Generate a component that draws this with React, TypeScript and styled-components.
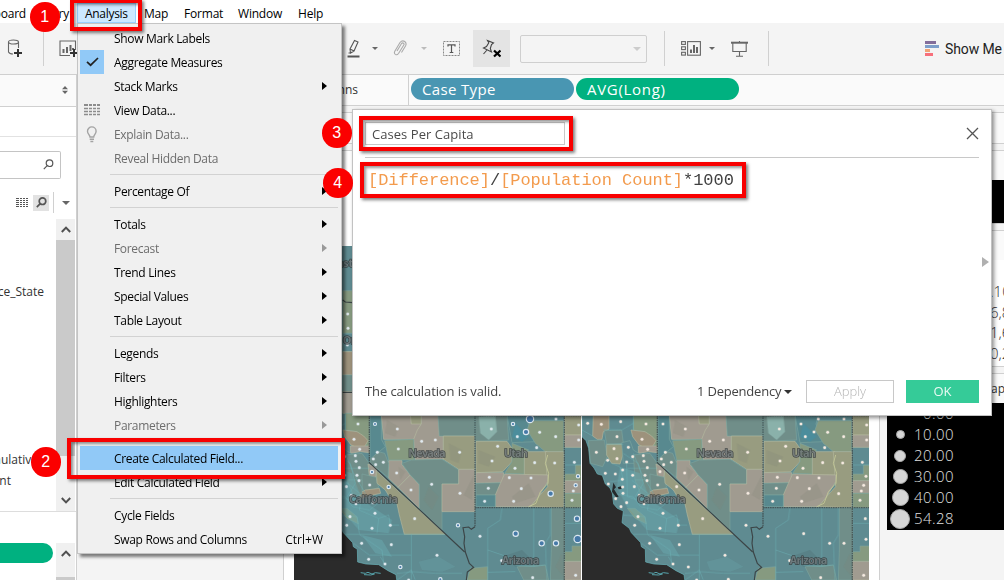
import React from 'react';
import styled, { createGlobalStyle, css } from 'styled-components';

const GlobalStyle = createGlobalStyle`
  * { box-sizing: border-box; }
  body { margin: 0; background: #fff; overflow: hidden; }
`;

const ui = `"Open Sans", "Noto Sans", sans-serif`;

const Screen = styled.div`
  position: relative;
  width: 1004px;
  height: 580px;
  overflow: hidden;
  display: flex;
  flex-direction: column;
  background: #f4f4f4;
  font: 12px/16px ${ui};
  color: #333;
`;

/* ---------- menu bar and toolbar ---------- */
const MenuBar = styled.div`
  display: flex;
  height: 23px;
  flex: none;
  background: #fff;
  color: #000;
  padding-top: 3px;
`;
const MenuTitle = styled.span<{ $w: number; $open?: boolean; $end?: boolean }>`
  width: ${p => p.$w}px;
  flex: none;
  height: 20px;
  line-height: 22px;
  white-space: nowrap;
  padding-left: ${p => (p.$open ? 7 : 8)}px;
  letter-spacing: -0.2px;
  ${p => p.$end && css`display: flex; justify-content: flex-end; padding-left: 0;`}
  ${p => p.$open && css`background: #cce8ff; border: 1px solid #99d1ff; line-height: 20px; letter-spacing: -0.3px;`}
`;
const Toolbar = styled.div`
  display: flex;
  flex: none;
  align-items: center;
  height: 52px;
  background: #f4f4f4;
  border-bottom: 1px solid #cfcfcf;
`;
const Tool = styled.span<{ $w: number; $ml?: number; $on?: boolean }>`
  display: flex;
  flex: none;
  align-items: center;
  justify-content: center;
  width: ${p => p.$w}px;
  height: 37px;
  margin-left: ${p => p.$ml ?? 0}px;
  background: ${p => (p.$on ? '#e4e4e4' : 'none')};
`;
const Divider = styled.span<{ $ml: number; $h?: number }>`
  flex: none;
  width: 1px;
  height: ${p => p.$h ?? 35}px;
  margin-left: ${p => p.$ml}px;
  background: #d0d0d0;
`;
const Caret = styled.span<{ $ml?: number; $c?: string; $s?: number }>`
  flex: none;
  width: 0;
  height: 0;
  margin-left: ${p => p.$ml ?? 0}px;
  border: ${p => p.$s ?? 3}px solid transparent;
  border-top-color: ${p => p.$c ?? '#666'};
  border-bottom: 0;
`;
const Combo = styled.span`
  display: flex;
  flex: none;
  align-items: center;
  justify-content: flex-end;
  width: 127px;
  height: 28px;
  margin-left: 10px;
  padding-right: 5px;
  border: 1px solid #cfcfcf;
  border-radius: 2px;
`;
const ShowMe = styled.span`
  flex: none;
  margin-left: 5px;
  font: 14px/18px Roboto, sans-serif;
  letter-spacing: -0.1px;
  white-space: nowrap;
  color: #222;
`;

/* ---------- body columns ---------- */
const Body = styled.div`
  display: flex;
  flex: 1;
  min-height: 0;
`;
const DataPane = styled.div`
  display: flex;
  flex-direction: column;
  width: 77px;
  flex: none;
  background: #fff;
  border-right: 1px solid #d0d0d0;
`;
const DataHeader = styled.div`
  display: flex;
  align-items: center;
  justify-content: flex-end;
  height: 32px;
  padding: 0 8px 2px 0;
  background: #fafafa;
  border-bottom: 1px solid #d0d0d0;
`;
const DataSource = styled.div`
  height: 30px;
  border-bottom: 1px solid #e2e2e2;
`;
const SearchBox = styled.div`
  display: flex;
  align-items: center;
  justify-content: flex-end;
  width: 61px;
  height: 28px;
  margin-top: 14px;
  padding: 0 6px 2px 0;
  border: 1px solid #c4c4c4;
  border-left: 0;
  border-radius: 0 2px 2px 0;
`;
const ViewTools = styled.div`
  display: flex;
  align-items: center;
  height: 40px;
  padding: 7px 0 0 16px;
`;
const FindButton = styled.span`
  display: flex;
  align-items: center;
  justify-content: center;
  width: 16px;
  height: 16px;
  margin-left: 5px;
  background: #e2e2e2;
`;
const Fields = styled.div`
  display: flex;
  height: 293px;
  border-bottom: 1px solid #ddd;
`;
const FieldNames = styled.div`
  display: flex;
  flex-direction: column;
  width: 56px;
  overflow: hidden;
  white-space: nowrap;
`;
const FieldName = styled.span<{ $mt: number; $w: number }>`
  display: flex;
  justify-content: flex-end;
  margin-top: ${p => p.$mt}px;
  width: ${p => p.$w}px;
  height: 20px;
  line-height: 20px;
`;
const ScrollBar = styled.div`
  display: flex;
  flex-direction: column;
  align-items: center;
  width: 19px;
  background: #f0f0f0;
`;
const ScrollButton = styled.span<{ $mt?: number }>`
  display: flex;
  align-items: center;
  justify-content: center;
  height: 21px;
  margin-top: ${p => p.$mt ?? 0}px;
`;
const ScrollThumb = styled.span<{ $h: number }>`
  width: 19px;
  height: ${p => p.$h}px;
  background: #cacaca;
`;
const Measures = styled.div`
  display: flex;
  align-items: flex-start;
  height: 68px;
  padding-top: 31px;
`;
const MeasurePill = styled.span`
  width: 53px;
  height: 20px;
  margin-right: 3px;
  background: #00b180;
  border-radius: 0 10px 10px 0;
`;
const Work = styled.div`
  display: flex;
  flex-direction: column;
  flex: 1;
`;
const Shelf = styled.div`
  display: flex;
  flex: none;
  align-items: flex-start;
  height: 31px;
  background: #fafafa;
  border-bottom: 1px solid #d0d0d0;
`;
const ShelfLabel = styled.span`
  display: flex;
  justify-content: flex-end;
  width: 332px;
  height: 30px;
  padding-right: 50px;
  border-right: 1px solid #d0d0d0;
  line-height: 30px;
  font-size: 12px;
`;
const FieldPill = styled.span<{ $c: string; $ls: number }>`
  width: 163px;
  height: 22px;
  margin: 3px 0 0 2px;
  padding-left: 11px;
  border-radius: 11px;
  background: ${p => p.$c};
  color: #fff;
  font: 15px/23px ${ui};
  letter-spacing: ${p => p.$ls}px;
`;
const RowShelf = styled.div`
  height: 32px;
  flex: none;
  margin: 6px 0;
  background: #fafafa;
  border: solid #d0d0d0;
  border-width: 1px 0;
`;
const Canvas = styled.div`
  display: flex;
  flex: 1;
  min-height: 0;
`;
const Cards = styled.div`
  width: 207px;
  flex: none;
  border-right: 1px solid #d0d0d0;
`;
const Sheet = styled.div`
  display: flex;
  flex: none;
  align-items: flex-end;
  width: 596px;
  padding-left: 10px;
  gap: 1px;
  background: #fff;
  border-top: 1px solid #d0d0d0;
  border-right: 1px solid #d0d0d0;
`;
const Legends = styled.div`
  display: flex;
  flex-direction: column;
  flex: 1;
  padding-left: 7px;
`;
const LegendTitle = styled.div`
  height: 30px;
  flex: none;
  padding-left: 104px;
  background: #fafafa;
  border-top: 1px solid #d0d0d0;
  line-height: 30px;
  white-space: nowrap;
  overflow: hidden;
`;
const ColorLegend = styled.div`
  height: 44px;
  flex: none;
  margin-bottom: 6px;
  background: #000;
  border-bottom: 1px solid #d0d0d0;
`;
const ValueLegend = styled.div`
  display: flex;
  flex-direction: column;
  height: 107px;
  flex: none;
  margin-bottom: 6px;
  padding-top: 21px;
  background: #fff;
  border-bottom: 1px solid #d0d0d0;
  font: 300 15px/20.7px ${ui};
  overflow: hidden;
`;
const Value = styled.span<{ $x: number }>`
  padding-left: ${p => p.$x}px;
  white-space: nowrap;
`;
const SizeLegend = styled.div`
  height: 127px;
  flex: none;
  background: #000;
  color: #e0e0e0;
  font: 300 15px/21px ${ui};
  letter-spacing: 0.45px;
`;
const SizeRow = styled.div`
  display: flex;
  align-items: center;
  height: 21px;
`;
const DotCell = styled.span`
  display: flex;
  align-items: center;
  justify-content: center;
  width: 26px;
  margin-right: 1px;
`;
const Dot = styled.span<{ $d: number }>`
  flex: none;
  width: ${p => p.$d}px;
  height: ${p => p.$d}px;
  border-radius: 50%;
  background: #d6d6d6;
  border: 1px solid #a8a8a8;
`;

/* ---------- drop-down menu ---------- */
const Menu = styled.div`
  position: absolute;
  left: 77px;
  top: 23px;
  width: 265px;
  height: 531px;
  padding: 2px;
  background: #f0f0f0;
  border: 1px solid #c4c4c4;
  box-shadow: 3px 3px 3px rgba(0, 0, 0, 0.5);
  color: #000;
`;
const Item = styled.div<{ $hot?: boolean; $off?: boolean }>`
  display: flex;
  align-items: center;
  height: 24px;
  margin-right: 1px;
  padding-right: 13px;
  background: ${p => (p.$hot ? '#91c9f7' : 'none')};
  color: ${p => (p.$off ? '#6d6d6d' : '#000')};
  letter-spacing: -0.32px;
`;
const ItemIcon = styled.span<{ $on?: boolean }>`
  display: flex;
  align-items: center;
  justify-content: center;
  width: 24px;
  height: 24px;
  margin-right: 10px;
  background: ${p => (p.$on ? '#91c9f7' : 'none')};
`;
const ItemText = styled.span`
  flex: 1;
  padding-top: 2px;
  white-space: nowrap;
`;
const Shortcut = styled.span`
  margin-right: 2px;
  padding-top: 2px;
  letter-spacing: 0;
`;
const SubArrow = styled.span<{ $off?: boolean }>`
  border: 4px solid transparent;
  border-left: 5px solid ${p => (p.$off ? '#999' : '#000')};
  border-right: 0;
  margin-right: -2px;
`;
const Separator = styled.div`
  height: 1px;
  margin: 4px 1px 4px 30px;
  background: #d2d2d2;
`;

/* ---------- calculation dialog ---------- */
const Dialog = styled.div`
  position: absolute;
  left: 352px;
  top: 109px;
  width: 640px;
  height: 307px;
  display: flex;
  flex-direction: column;
  padding: 12px;
  background: #fff;
  border: 1px solid #c2c2c2;
  box-shadow: 2px 2px 4px rgba(0, 0, 0, 0.45);
`;
const DialogHead = styled.div`
  display: flex;
  align-items: center;
  justify-content: space-between;
  flex: none;
  height: 36px;
  padding-bottom: 12px;
  border-bottom: 1px solid #c8c8c8;
`;
const NameInput = styled.span`
  width: 200px;
  height: 23px;
  padding-left: 6px;
  border: 1px solid #c8c8c8;
  font: 13px/22px ${ui};
  letter-spacing: 0.05px;
  color: #4a4a4a;
`;
const Formula = styled.div`
  flex: 1;
  padding: 11px 0 0 3px;
  font: 17px/24px "Liberation Mono", monospace;
  letter-spacing: -0.04px;
  color: #404040;
`;
const Field = styled.span`
  color: #f39b4d;
`;
const DialogFoot = styled.div`
  display: flex;
  align-items: center;
  height: 23px;
  font: 13px/21px ${ui};
  color: #444;
`;
const Status = styled.span`
  width: 332px;
  letter-spacing: -0.1px;
`;
const Dependency = styled.span`
  width: 87px;
  letter-spacing: -0.2px;
`;
const Button = styled.span<{ $primary?: boolean }>`
  flex: none;
  width: ${p => (p.$primary ? 73 : 88)}px;
  height: 23px;
  margin-left: ${p => (p.$primary ? 12 : 14)}px;
  text-align: center;
  font-weight: ${p => (p.$primary ? 400 : 300)};
  line-height: 20px;
  color: ${p => (p.$primary ? '#eafaf4' : '#b4b4b4')};
  background: ${p => (p.$primary ? '#35cb98' : '#fff')};
  border: 1px solid ${p => (p.$primary ? '#35cb98' : '#c8c8c8')};
`;
const Expander = styled.span`
  position: absolute;
  right: 2px;
  top: 147px;
  border: 5px solid transparent;
  border-left: 7px solid #b0b0b0;
  border-right: 0;
`;

/* ---------- step markers ---------- */
const Highlight = styled.div<{ $x: number; $y: number; $w: number; $h: number }>`
  position: absolute;
  left: ${p => p.$x}px;
  top: ${p => p.$y}px;
  width: ${p => p.$w}px;
  height: ${p => p.$h}px;
  border: 4px solid #f80000;
  box-shadow: 2px 2px 3px rgba(0, 0, 0, 0.5), inset 2px 2px 3px rgba(0, 0, 0, 0.4);
`;
const Step = styled.div<{ $x: number; $y: number }>`
  position: absolute;
  left: ${p => p.$x}px;
  top: ${p => p.$y}px;
  width: 29.5px;
  height: 29.5px;
  border-radius: 50%;
  background: #fb0000;
  color: #fff;
  text-align: center;
  font: 16px/29px "Liberation Sans", sans-serif;
`;

/* ---------- map ---------- */
const T = '#5f8b91', G = '#869a80', N = '#a09b90', O = '#989c80', S = '#708e89', B = '#58898f', P = '#9d927c';

const counties: [string, string][] = [
  // northern coast strip
  [G, '182,-328 212,-328 212,-200 182,-200'], [T, '182,-200 212,-200 212,-145 182,-145'],
  [P, '182,-145 212,-145 212,-75 182,-75'], [S, '182,-75 212,-75 212,-25 182,-25'],
  [N, '182,-25 212,-25 212,40 182,40'],
  // northern California
  [P, '70,40 117,40 117,88 100,95 96,118 82,118 68,108'],
  [G, '190,40 262,40 262,150 225,95 190,90'],
  [S, '103,92 155,90 160,130 110,133'],
  [P, '183,90 225,95 245,108 258,122 242,150 207,135 188,110'],
  [S, '55,122 103,120 112,170 98,200 62,190'],
  [O, '110,133 160,133 160,160 150,192 125,190 110,165'],
  [N, '205,138 262,138 262,158 235,155 205,160'],
  [T, '155,128 180,122 190,150 215,165 205,190 160,190'],
  [S, '190,165 240,160 262,190 262,240 195,240'],
  [N, '258,192 285,205 280,235 262,228'],
  [S, '240,222 282,232 290,262 240,280'],
  [P, '232,280 250,270 292,265 296,280 250,290 235,300'],
  [S, '195,240 240,240 240,282 215,290'],
  [O, '283,212 490,403 367,403 352,345 345,312 322,290 310,270 285,250'],
  [G, '172,325 195,325 225,350 230,372 195,355'],
  // Nevada
  [B, '264,45 298,45 298,118 310,140 285,160 264,185'],
  [N, '298,45 388,45 388,70 418,70 405,100 395,118 305,118'],
  [O, '385,45 418,45 418,72 388,72'],
  [N, '418,45 470,45 472,108 484,108 484,178 400,180 395,118 406,90 418,72'],
  [S, '468,45 578,45 578,108 472,108'],
  [O, '484,108 578,108 578,208 530,208 484,178'],
  [G, '308,122 395,118 397,180 320,180'],
  [N, '320,182 360,182 360,194 385,225 348,262 320,235'],
  [N, '385,225 412,255 412,325 348,262'],
  [S, '264,178 290,155 308,160 320,190 318,232 264,188'],
  [S, '360,190 388,180 480,178 530,210 530,252 480,252 480,390 412,325 412,252 385,225'],
  [N, '530,208 578,208 578,335 480,335 480,252 530,252'],
  // Utah
  [S, '580,45 675,45 680,120 580,124'],
  [B, '675,45 745,45 738,72 758,125 690,128'],
  [G, '745,62 845,62 845,155 790,155 760,130 735,90'],
  [O, '582,124 675,124 690,145 690,185 662,215 582,218'],
  [G, '690,130 740,150 727,160 727,222 668,220 690,185'],
  [O, '727,155 795,155 797,225 727,225'],
  [O, '790,155 845,155 845,323 745,320 770,290 797,260'],
  [N, '582,218 665,218 662,248 582,250'],
  [S, '582,250 662,248 655,285 582,285'],
  [N, '640,285 655,250 668,222 797,225 797,245 770,290 745,320 640,320'],
  [B, '582,285 640,285 640,320 582,320'],
  // eastern edge
  [O, '848,45 900,45 900,105 848,105'], [N, '848,105 900,105 900,142 848,142'],
  [G, '880,195 900,195 900,242 848,242 848,222 880,222'], [N, '848,242 900,242 900,280 848,280'],
  [G, '848,280 900,280 900,323 848,323'],
  [S, '808,323 848,323 848,540 805,540 808,450'],
  [G, '870,438 900,438 900,484 848,484 848,455 870,455'],
  [N, '848,484 900,484 900,540 848,540'],
  // southern Arizona
  [G, '565,505 617,500 617,540 555,540'],
  [S, '705,500 790,495 800,540 725,540'],
];

const waterways = [
  'M190,45V90 M100,88L155,90L190,70 M110,133L160,133 M160,160L205,190L220,250L195,290 M125,190L150,200L160,240L120,245 M170,190L172,290L220,305L262,300L345,310',
  'M172,205H262 M185,240L240,285L232,330L290,355L285,400 M130,280L190,290L212,320L262,330L300,300 M190,160L215,220L250,280',
  'M190,403H490 M388,403V540 M215,430L262,465L388,465 M290,355L320,345L325,375L352,375 M295,470L310,495 M345,520L395,515L460,520L540,520',
  'M160,345L225,350L232,400 M232,403L300,450L305,490 M345,540L388,510L400,540',
  'M617,540V385L655,360L660,323 M755,323V500L790,495 M805,323V405L790,430L795,540 M617,450L690,475L700,495L755,500 M617,517L700,515',
  'M848,195H900 M848,370H900 M36,90L68,108',
];

const dots: [number, number][] = [
  [53, 70], [94, 73], [152, 65], [228, 72], [141, 110], [216, 118], [79, 157], [132, 146], [175, 142], [233, 148], [113, 181],
  [141, 176], [170, 186], [188, 170], [220, 167], [222, 184], [232, 203], [106, 220], [136, 222], [158, 210], [188, 226],
  [225, 226], [231, 242], [115, 252], [157, 238], [193, 260], [158, 261], [263, 255], [159, 280], [137, 296], [170, 308],
  [153, 320], [208, 286], [222, 311], [273, 308], [279, 340], [204, 350], [194, 376], [270, 385], [325, 376], [239, 430],
  [328, 434], [260, 478], [309, 492], [355, 501], [465, 466], [380, 540], [475, 538], [398, 356], [320, 260], [270, 215],
  [279, 72], [286, 157], [274, 177], [281, 194], [304, 187], [346, 87], [419, 124], [460, 120], [349, 147], [533, 157],
  [344, 219], [387, 270], [449, 253], [534, 280], [528, 376], [594, 409], [628, 87], [647, 139], [630, 183], [622, 232],
  [619, 265], [608, 304], [693, 72], [706, 110], [732, 96], [773, 97], [821, 110], [764, 143], [758, 188], [818, 189],
  [699, 205], [682, 233], [747, 234], [718, 266], [806, 281], [695, 304], [745, 57], [822, 57], [890, 75], [890, 120],
  [877, 187], [888, 229], [881, 256], [874, 273], [870, 301], [701, 401], [779, 430], [822, 430], [659, 482], [752, 533],
  [886, 356], [888, 418], [881, 526], [197, -258], [198, -215], [196, -165],
];

const blueDots: [number, number, number][] = [
  [744, 57, 11], [732, 96, 8], [693, 72, 5], [806, 281, 8], [885, 356, 8], [887, 417, 11], [701, 401, 8],
  [779, 430, 8], [822, 430, 8], [528, 376, 5], [279, 72, 4.5], [270, 216, 5], [320, 261, 5], [355, 501, 5], [888, 229, 5],
  [881, 256, 5], [475, 538, 5],
];

const MapSvg = styled.svg`
  display: block;
  flex: none;
  background: #2b2b2b;
  text {
    font: bold 33px ${ui};
    fill: #6f7779;
    stroke: #363c3e;
    stroke-width: 4px;
    paint-order: stroke;
    opacity: 0.85;
  }
`;

function StateMap({ cases }: { cases?: boolean }) {
  return (
    <MapSvg width="287" height="334" viewBox="36 -462 861 1002">
      <path
        fill={T}
        stroke="#69b4ba"
        strokeWidth="2"
        d="M36,-470V110L48,122L56,145L60,190L72,204L82,222L97,226L106,252L120,264L127,280L131,312L142,325L160,333L156,368L178,385L184,398L212,428L214,440L226,448L227,486L252,492L290,494L318,512L342,524L345,545H905V-470Z"
      />
      {counties.map(([fill, points], i) => (
        <polygon key={i} fill={fill} points={points} stroke={fill === N || fill === O || fill === P ? '#b5baa0' : '#7ca69f'} strokeWidth="1.8" />
      ))}
      <g fill="#6aa9ae" opacity="0.5">
        <path d="M150,200L210,220L240,300L330,360L320,400L230,390L170,320L140,260Z" />
        <path d="M590,50L640,45L645,95L620,120L595,100Z" fill="#a4d4cb" />
        <path d="M700,70L740,110L720,125L690,110Z" fill="#3f91a8" />
        <path d="M410,485L470,470L520,500L480,515L420,510Z" opacity="0.6" />
        <path d="M240,405L300,420L330,470L280,460Z" />
        <path d="M660,470L720,450L760,490L700,500Z" fill="#54777c" />
      </g>
      <g fill="#7f8476" opacity="0.22">
        <path d="M315,60L350,80L340,110L310,100Z M500,130L540,150L530,190L505,180Z M440,260L470,290L450,330L425,300Z M590,150L640,170L620,200L590,190Z M690,290L740,250L760,290L700,310Z M545,285L575,225L570,300Z M350,200L370,215L355,240Z M840,460L846,530L820,500Z" />
      </g>
      {waterways.map(d => (
        <path key={d} d={d} fill="none" stroke="#6fb3b7" strokeWidth="2" opacity="0.7" />
      ))}
      <path d="M130,248L138,262L132,268L146,290L138,292L126,275Z M143,262l10,-3 2,8 -9,1Z" fill="#252a2b" />
      <path d="M797,165L790,190L800,220L798,250L775,275L762,310L740,320" fill="none" stroke="#c4c998" strokeWidth="2.5" />
      <path d="M236,518l14,2 8,-3 12,5 10,-4 16,2 M246,524l20,1 12,-3" fill="none" stroke="#57a5ad" strokeWidth="3" />
      <g fill="none" stroke="#3c4547" strokeWidth="3.5">
        <path d="M182,-300L190,-294L212,-292 M182,-23H212 M262,188L548,456" />
        <path d="M579,380L568,388L560,381L543,383L548,410L546,430L550,456L562,490L575,502L556,516L553,540" />
        <path d="M262,45V190 M579,45V380 M579,323H900 M847,45V540 M579,47H900" strokeDasharray="5 2" strokeWidth="4" opacity="0.75" />
      </g>
      {dots.map(([x, y], i) => (
        <g key={i}>
          <circle cx={x} cy={y} r="6" fill="#fff" opacity="0.2" />
          <circle cx={x} cy={y} r="4" fill={cases ? '#dfe9ef' : '#f5e9df'} />
        </g>
      ))}
      {cases && blueDots.map(([x, y, r], i) => (
        <circle key={i} cx={x} cy={y} r={r} fill="#4679a8" stroke="#dce8f0" strokeWidth="3.5" />
      ))}
      <text x="379" y="172" textLength="112">Nevada</text>
      <text x="666" y="172" textLength="72">Utah</text>
      <text x="201" y="308" textLength="147">California</text>
      <text x="659" y="491" textLength="113">Arizona</text>
      <text x="124" y="-400" textLength="90">Coast</text>
      <text x="182" y="-168" textLength="110">Oregon</text>
    </MapSvg>
  );
}

/* ---------- icons ---------- */
const Magnifier = ({ s = 11, w = 1.2 }: { s?: number; w?: number }) => (
  <svg width={s} height={s} viewBox="0 0 11 11" fill="none" stroke="#555" strokeWidth={w}>
    <circle cx="6.5" cy="4.2" r="3.3" /><path d="M4.2 6.7L.8 10.2" />
  </svg>
);
const Chevron = ({ down }: { down?: boolean }) => (
  <svg width="10" height="7" viewBox="0 0 10 7" fill="none" stroke="#505050" strokeWidth="2">
    <path d={down ? 'M.8 1L5 5.4L9.2 1' : 'M.8 6L5 1.6L9.2 6'} />
  </svg>
);
const Grid = () => (
  <svg width="16" height="13" viewBox="0 0 16 13" stroke="#8c8c8c">
    <path d="M0 1H16" strokeWidth="2" strokeDasharray="4 1 3 1 3 1 3 0" />
    <path d="M0 4.5H16M0 7.5H16M0 10.5H16" strokeWidth="1.6" strokeDasharray="4 1 3 1 3 1 3 0" />
  </svg>
);
const ListGrid = () => (
  <svg width="12" height="10" viewBox="0 0 12 10" stroke="#555">
    <path d="M0 .5H12M0 2.5H12M0 4.5H12M0 6.5H12M0 8.5H12" strokeDasharray="3 1 2 1 2 1 2 0" />
  </svg>
);

type Entry = { t?: string; icon?: React.ReactNode; on?: boolean; off?: boolean; sub?: boolean; hot?: boolean; key?: string };
const entries: Entry[] = [
  { t: 'Show Mark Labels' },
  {
    t: 'Aggregate Measures', on: true,
    icon: <svg width="13" height="10" viewBox="0 0 13 10" fill="none" stroke="#222" strokeWidth="1.7"><path d="M1 4.8L4.6 8.2L12 1" /></svg>,
  },
  { t: 'Stack Marks', sub: true },
  { t: 'View Data...', icon: <Grid /> },
  {
    t: 'Explain Data...', off: true,
    icon: <svg width="12" height="17" viewBox="0 0 12 17" fill="none" stroke="#a3a3a3" strokeWidth="1.4"><path d="M4 11C4 9 1.5 8 1.5 5.2A4.3 4.3 0 0 1 10.1 5.2C10.1 8 7.7 9 7.7 11ZM3.7 13.2H8M4.4 15.5H7.3" /></svg>,
  },
  { t: 'Reveal Hidden Data', off: true },
  {},
  { t: 'Percentage Of', sub: true },
  {},
  { t: 'Totals', sub: true },
  { t: 'Forecast', sub: true, off: true },
  { t: 'Trend Lines', sub: true },
  { t: 'Special Values', sub: true },
  { t: 'Table Layout', sub: true },
  {},
  { t: 'Legends', sub: true },
  { t: 'Filters', sub: true },
  { t: 'Highlighters', sub: true },
  { t: 'Parameters', sub: true, off: true },
  {},
  { t: 'Create Calculated Field...', hot: true },
  { t: 'Edit Calculated Field', sub: true },
  {},
  { t: 'Cycle Fields' },
  { t: 'Swap Rows and Columns', key: 'Ctrl+W' },
];

export default function App() {
  return (
    <Screen>
      <GlobalStyle />
      <MenuBar>
        <MenuTitle $w={26} $end>Dashboard</MenuTitle>
        <MenuTitle $w={43} $end>Story</MenuTitle>
        <MenuTitle $w={8} />
        <MenuTitle $w={59} $open>Analysis</MenuTitle>
        <MenuTitle $w={40}>Map</MenuTitle>
        <MenuTitle $w={54}>Format</MenuTitle>
        <MenuTitle $w={60}>Window</MenuTitle>
        <MenuTitle $w={50}>Help</MenuTitle>
      </MenuBar>
      <Toolbar>
        <Tool $w={16} $ml={7}>
          <svg width="16" height="19" viewBox="0 0 16 19" fill="none" stroke="#666" strokeWidth="1.1">
            <ellipse cx="6.5" cy="3" rx="5" ry="2" /><path d="M1.5 3V13Q2.5 15 6 15M11.5 3V9" />
            <path d="M11 10V18M7 14H15" stroke="#333" strokeWidth="2" />
          </svg>
        </Tool>
        <Divider $ml={20} />
        <Tool $w={19} $ml={15}>
          <svg width="19" height="18" viewBox="0 0 19 18" fill="none" stroke="#666" strokeWidth="1.1">
            <path d="M11 15.5H1V1H16.5V10" /><path d="M4.5 9V13M8 7V13M11.5 5V11M14 8V10" strokeWidth="2" />
            <path d="M15 9V17M11 13H19" stroke="#333" strokeWidth="2" />
          </svg>
        </Tool>
        <Tool $w={13} $ml={269}>
          <svg width="13" height="19" viewBox="0 0 13 19" fill="none" stroke="#555" strokeWidth="1.1">
            <path d="M3 10L7.5 1.5L11 3L7 12L3.5 14ZM3 10L7 12M1.5 14L3.5 14" /><path d="M.5 17.5H12.5" strokeWidth="2" />
          </svg>
        </Tool>
        <Caret $ml={12} />
        <Tool $w={14} $ml={15}>
          <svg width="14" height="17" viewBox="0 0 14 17" fill="none" stroke="#aaa" strokeWidth="1.1">
            <path d="M4 11L8.5 3.5Q9.5 2.5 10.5 3.2Q11.5 4 10.8 5L5.5 13.5Q4 15.5 2.3 14.4Q.8 13.3 1.8 11.3L7 2.5Q9.3 -.2 11.7 1.5Q14 3.3 12.5 6L8.5 12.5" />
          </svg>
        </Tool>
        <Caret $ml={14} $c="#bbb" />
        <Tool $w={17} $ml={16}>
          <svg width="17" height="15" viewBox="0 0 17 15" fill="none" stroke="#888">
            <rect x=".5" y=".5" width="16" height="14" strokeDasharray="2 1" />
            <path d="M5 5.5V3.8H12V5.5M8.5 4V11.5M6.7 11.5H10.3" stroke="#555" strokeWidth="1.2" />
          </svg>
        </Tool>
        <Tool $w={37} $ml={13} $on>
          <svg width="19" height="19" viewBox="0 0 19 19" fill="none" stroke="#444" strokeWidth="1.1">
            <path d="M5.5 1.5L11.5 4L9.5 5.5L8.3 9.5L9.5 13L1.5 9L4.5 7.5L6.8 3.8ZM5 11L1.5 15" />
            <path d="M12 11.5L18.5 17.5M18.5 11.5L12 17.5" stroke="#000" strokeWidth="2.3" />
          </svg>
        </Tool>
        <Combo><Caret $c="#ccc" $s={4} /></Combo>
        <Divider $ml={17} />
        <Tool $w={20} $ml={16}>
          <svg width="20" height="15" viewBox="0 0 20 15" fill="none" stroke="#666" strokeWidth="1.1">
            <rect x=".6" y=".6" width="3.8" height="2.8" /><rect x=".6" y="5.8" width="3.8" height="2.8" /><rect x=".6" y="11.3" width="3.8" height="2.8" />
            <rect x="6.6" y=".6" width="12.8" height="13.6" /><path d="M10 8.5V12M13 4V12M16 6V12" strokeWidth="2" />
          </svg>
        </Tool>
        <Caret $ml={8} />
        <Tool $w={17} $ml={16}>
          <svg width="17" height="16" viewBox="0 0 17 16" fill="none" stroke="#666" strokeWidth="1.1">
            <path d="M0 1.7H17" strokeWidth="2" /><path d="M1.8 2V10.5H15.2V2M8.5 0V1M8.5 10.5V15M5 15.2H12" />
          </svg>
        </Tool>
        <Divider $ml={20} />
        <Tool $w={15} $ml={156}>
          <svg width="15" height="15" viewBox="0 0 15 15">
            <path fill="#836e9b" d="M0 0H11V3H0Z" /><path fill="#7e9fcb" d="M0 4H14V7H0Z" /><path fill="#f1a375" d="M0 8H5V11H0Z" /><path fill="#f76f7b" d="M0 12H8V15H0Z" />
          </svg>
        </Tool>
        <ShowMe>Show Me</ShowMe>
      </Toolbar>
      <Body>
        <DataPane>
          <DataHeader>
            <svg width="6" height="8" viewBox="0 0 6 8" fill="#666"><path d="M0 3.3L3 0L6 3.3ZM0 4.7L3 8L6 4.7Z" /></svg>
          </DataHeader>
          <DataSource />
          <SearchBox><Magnifier /></SearchBox>
          <ViewTools>
            <ListGrid />
            <FindButton><Magnifier w={1.7} /></FindButton>
            <Divider $ml={4} $h={21} />
            <Caret $ml={8} $s={4} />
          </ViewTools>
          <Fields>
            <FieldNames>
              <FieldName $mt={63} $w={44}>Province_State</FieldName>
              <FieldName $mt={148} $w={38}>Cumulative</FieldName>
              <FieldName $mt={1} $w={11}>Count</FieldName>
            </FieldNames>
            <ScrollBar>
              <ScrollButton><Chevron /></ScrollButton>
              <ScrollThumb $h={216} />
              <ScrollButton $mt={34}><Chevron down /></ScrollButton>
            </ScrollBar>
          </Fields>
          <Measures>
            <MeasurePill />
            <ScrollBar>
              <ScrollButton><Chevron /></ScrollButton>
              <ScrollButton $mt={13}><ScrollThumb $h={21} /></ScrollButton>
            </ScrollBar>
          </Measures>
        </DataPane>
        <Work>
          <Shelf>
            <ShelfLabel>Columns</ShelfLabel>
            <FieldPill $c="#4996b2" $ls={0.35}>Case Type</FieldPill>
            <FieldPill $c="#00b180" $ls={0.7}>AVG(Long)</FieldPill>
          </Shelf>
          <RowShelf />
          <Canvas>
            <Cards />
            <Sheet>
              <StateMap cases />
              <StateMap />
            </Sheet>
            <Legends>
              <LegendTitle />
              <ColorLegend />
              <LegendTitle />
              <ValueLegend>
                <Value $x={103}>.10</Value>
                <Value $x={103}>6,8</Value>
                <Value $x={103}>1,6</Value>
                <Value $x={103}>0,2</Value>
              </ValueLegend>
              <LegendTitle>apita</LegendTitle>
              <SizeLegend>
                {['0.00', '10.00', '20.00', '30.00', '40.00', '54.28'].map((v, i) => (
                  <SizeRow key={v}>
                    <DotCell><Dot $d={[2, 9, 12, 15, 17, 20][i]} /></DotCell>
                    <span>{i === 0 ? '\u2007' : ''}{v}</span>
                  </SizeRow>
                ))}
              </SizeLegend>
            </Legends>
          </Canvas>
        </Work>
      </Body>

      <Menu>
        {entries.map((e, i) =>
          e.t ? (
            <Item key={i} $hot={e.hot} $off={e.off}>
              <ItemIcon $on={e.on}>{e.icon}</ItemIcon>
              <ItemText>{e.t}</ItemText>
              {e.key && <Shortcut>{e.key}</Shortcut>}
              {e.sub && <SubArrow $off={e.off} />}
            </Item>
          ) : (
            <Separator key={i} />
          )
        )}
      </Menu>

      <Dialog>
        <DialogHead>
          <NameInput>Cases Per Capita</NameInput>
          <svg width="13" height="13" viewBox="0 0 13 13" stroke="#555" strokeWidth="1.3"><path d="M1 1L12 12M12 1L1 12" /></svg>
        </DialogHead>
        <Formula>
          <Field>[Difference]</Field>/<Field>[Population Count]</Field>*1000
        </Formula>
        <DialogFoot>
          <Status>The calculation is valid.</Status>
          <Dependency>1 Dependency</Dependency>
          <Caret $s={4} $c="#333" />
          <Button>Apply</Button>
          <Button $primary>OK</Button>
        </DialogFoot>
        <Expander />
      </Dialog>

      <Highlight $x={70} $y={-1} $w={72} $h={32} />
      <Highlight $x={67} $y={438} $w={278} $h={41} />
      <Highlight $x={359} $y={116} $w={214} $h={35} />
      <Highlight $x={360} $y={162} $w={386} $h={36} />
      <Step $x={30} $y={2}>1</Step>
      <Step $x={31} $y={447}>2</Step>
      <Step $x={322} $y={118}>3</Step>
      <Step $x={323} $y={168}>4</Step>
    </Screen>
  );
}
